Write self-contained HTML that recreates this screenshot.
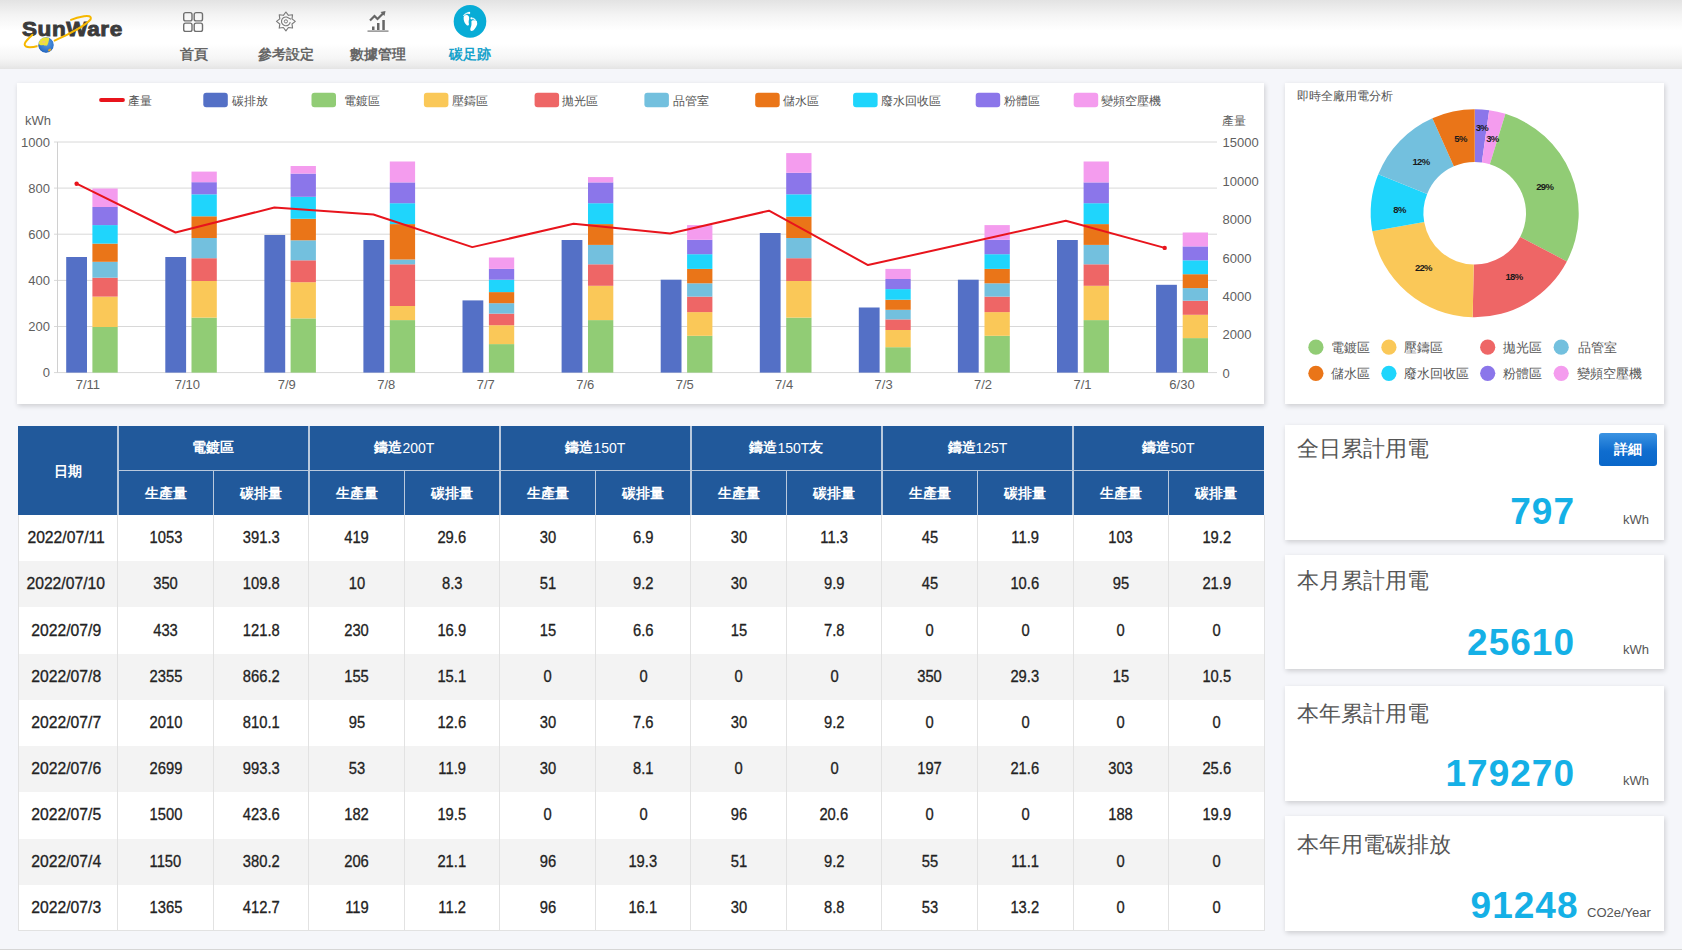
<!DOCTYPE html>
<html lang="zh-Hant">
<head>
<meta charset="utf-8">
<title>SunWare 碳足跡</title>
<style>
*{margin:0;padding:0;box-sizing:border-box}
html,body{width:1682px;height:950px;overflow:hidden}
body{position:relative;background:#f5f6fa;font-family:"Liberation Sans",sans-serif;color:#333}
.hdr{position:absolute;left:0;top:0;width:1682px;height:68.7px;
 background:linear-gradient(to bottom,#e3e3e3 0%,#f4f4f4 22%,#ffffff 44%,#ffffff 63%,#f6f6f6 84%,#ececec 94%,#e4e4e4 100%)}
.logo{position:absolute;left:21.5px;top:15px;font-size:20.5px;line-height:27px;font-weight:bold;color:#3b3b3b;letter-spacing:0.5px;-webkit-text-stroke:0.9px #3b3b3b;transform:scaleX(1.1);transform-origin:0 0}
.nav{position:absolute;top:46px;font-size:14px;color:#666;white-space:nowrap;font-weight:bold}
.nav.act{color:#17a2cb}
.card{position:absolute;background:#fff;box-shadow:1px 2px 5px rgba(0,0,0,0.17)}
svg.charts{position:absolute;left:0;top:0}
.ax{font-size:13px;fill:#5f5f5f;font-family:"Liberation Sans",sans-serif}
.lg{font-size:12.3px;fill:#555;font-family:"Liberation Sans",sans-serif}
.pl{font-size:9.5px;font-weight:bold;letter-spacing:-0.7px;fill:#1a1a1a;font-family:"Liberation Sans",sans-serif}
.th{position:absolute;background:#21599b;color:#fff;font-size:14px;font-weight:bold;display:flex;align-items:center;justify-content:center}
.th.s{padding-top:3px}
.th .n{font-weight:normal}
.hl{position:absolute;background:#b9c9dd}
.tr{position:absolute;left:18px;width:1246px}
.td{position:absolute;display:flex;align-items:center;justify-content:center;font-size:15.5px;color:#222}
.td span{display:inline-block;font-size:16.2px;transform:scaleX(0.91);-webkit-text-stroke:0.3px #222;margin-top:-1px}
.td.d span{transform:translateX(-1.8px) scaleX(0.97)}
.vl{position:absolute;width:1px;background:#e2e2e2}
.stat .t{position:absolute;left:12px;font-size:21.5px;color:#555;white-space:nowrap}
.stat .v{position:absolute;font-size:37px;font-weight:bold;color:#15b0e6;white-space:nowrap;line-height:1;letter-spacing:1px}
.stat .u{position:absolute;font-size:13px;color:#555;white-space:nowrap;line-height:1}
.btn{position:absolute;left:314px;top:8px;width:58px;height:33px;border-radius:3px;background:linear-gradient(#3b93e2,#0f6dcf 55%,#0a67c9);color:#fff;font-size:14px;font-weight:bold;display:flex;align-items:center;justify-content:center}
</style>
</head>
<body>
<div class="hdr">
  <div class="logo">SunWare</div>
  <svg style="position:absolute;left:0;top:0" width="140" height="68">
    <defs>
      <radialGradient id="gl" cx="0.55" cy="0.4" r="0.7">
        <stop offset="0" stop-color="#5b9be0"/><stop offset="0.65" stop-color="#3176cc"/><stop offset="1" stop-color="#1a56ae"/>
      </radialGradient>
      <clipPath id="gc"><circle cx="46" cy="45" r="7.9"/></clipPath>
    </defs>
    <path d="M32.4,34.8 C28,39 22,44 26,46.5 C29,48 34,47 38,46 M54.5,40.6 C70,34 86,25 90.5,19.5 C92,16 88,15.5 84,16.2 C79,17 74,18.5 71,19.8" fill="none" stroke="#f6b800" stroke-width="2" stroke-linecap="round"/>
    <circle cx="46" cy="45" r="7.9" fill="url(#gl)"/>
    <g clip-path="url(#gc)"><path d="M38.3,43.5 C38.8,41 40.5,38.6 43,37.5 C45,37 47.5,37 49.2,37.9 C49.4,39.5 48.6,41 48.4,42.5 C47.8,43.8 47.6,45.2 46.6,45.8 C45.5,45.2 44.6,46 43.8,45.3 C42.8,44.6 41.8,45.8 40.6,45.2 C39.8,44.6 39,44.8 38.3,44.6 Z" fill="#ece23a"/>
    <ellipse cx="43.8" cy="42" rx="1.6" ry="1.3" fill="#f0c27a" opacity="0.8"/>
    <ellipse cx="49.6" cy="50" rx="1.8" ry="1.1" transform="rotate(-35 49.6 50)" fill="#e6a424"/></g>
    <circle cx="46" cy="45" r="8.4" fill="none" stroke="#fff" stroke-width="1" opacity="0.7"/>
  </svg>
  <!-- grid icon -->
  <svg style="position:absolute;left:182px;top:11px" width="22" height="22" viewBox="0 0 22 22">
    <g fill="none" stroke="#6f6f6f" stroke-width="1.4">
      <rect x="1.7" y="1.6" width="8.3" height="8.3" rx="1.9"/><rect x="12.2" y="1.6" width="8.3" height="8.3" rx="1.9"/>
      <rect x="1.7" y="12.1" width="8.3" height="8.3" rx="1.9"/><rect x="12.2" y="12.1" width="8.3" height="8.3" rx="1.9"/>
    </g>
  </svg>
  <div class="nav" style="left:180px">首頁</div>
  <!-- gear -->
  <svg style="position:absolute;left:272px;top:8px" width="28" height="28" viewBox="0 0 28 28">
    <path d="M13.90,4.00 L16.43,7.30 L20.55,6.75 L20.00,10.87 L23.30,13.40 L20.00,15.93 L20.55,20.05 L16.43,19.50 L13.90,22.80 L11.37,19.50 L7.25,20.05 L7.80,15.93 L4.50,13.40 L7.80,10.87 L7.25,6.75 L11.37,7.30 Z" fill="none" stroke="#7a7a7a" stroke-width="1.15" stroke-linejoin="round"/>
    <path d="M18.23,14.16 A4.4,4.4 0 1 1 14.66,9.07 L19.10,11.20" fill="none" stroke="#7a7a7a" stroke-width="1.1"/>
    <circle cx="13.9" cy="13.4" r="1.6" fill="none" stroke="#7a7a7a" stroke-width="1"/>
  </svg>
  <div class="nav" style="left:258px">參考設定</div>
  <!-- chart icon -->
  <svg style="position:absolute;left:366px;top:11px" width="24" height="22" viewBox="0 0 24 22">
    <path d="M4,9.5 L8.5,5 L11.5,8 L18,1.5" fill="none" stroke="#666" stroke-width="2.2"/>
    <path d="M14.5,1 L19.5,0 L18.5,5 Z" fill="#666"/>
    <rect x="6" y="15.5" width="2.5" height="3.5" fill="#666"/>
    <rect x="11" y="12" width="2.5" height="7" fill="#666"/>
    <rect x="16.3" y="9" width="2.5" height="10" fill="#666"/>
    <rect x="1.5" y="19.5" width="21" height="1.2" fill="#777"/>
  </svg>
  <div class="nav" style="left:350px">數據管理</div>
  <!-- footprint -->
  <svg style="position:absolute;left:453px;top:5px" width="34" height="34" viewBox="0 0 34 34">
    <circle cx="17" cy="16.4" r="16.3" fill="#08acd6"/>
    <g fill="#fff">
      <path d="M10.6,12.5 C10.4,15.5 11.8,18.8 13.8,20.3 C15,21.1 16.3,20.3 15.9,18.8 C15.5,17.5 15.6,16 16.1,14.2 C16.6,11.8 15.5,10 13.3,10 C11.8,10 10.7,10.9 10.6,12.5 Z"/>
      <circle cx="16.1" cy="8" r="1.15"/><circle cx="14.5" cy="8" r="0.85"/><circle cx="13.1" cy="8.6" r="0.8"/><circle cx="11.9" cy="9.4" r="0.7"/><circle cx="10.9" cy="10.4" r="0.65"/>
      <path d="M18.4,16.8 C18.6,19 18.5,21 17.6,22.8 C16.9,24.4 17.3,26 18.6,26.1 C20.6,26.2 23.2,22.5 24.1,19.6 C24.7,17.4 23.5,15.6 21.5,15.3 C19.6,15.1 18.3,15.6 18.4,16.8 Z"/>
      <circle cx="18.5" cy="13.3" r="1.15"/><circle cx="20.1" cy="13.5" r="0.85"/><circle cx="21.4" cy="14.2" r="0.8"/><circle cx="22.5" cy="15.1" r="0.7"/><circle cx="23.4" cy="16.3" r="0.65"/>
    </g>
  </svg>
  <div class="nav act" style="left:449px">碳足跡</div>
</div>

<div class="card" style="left:17px;top:83px;width:1247px;height:320.5px"></div>
<div class="card" style="left:1285px;top:83px;width:379px;height:320.5px"></div>

<div class="th s" style="left:18.0px;top:425.5px;width:99.8px;height:89.5px">日期</div>
<div class="th" style="left:117.80px;top:425.5px;width:191.04px;height:45.0px">電鍍區</div>
<div class="th s" style="left:117.80px;top:470.5px;width:95.52px;height:44.5px">生產量</div>
<div class="th s" style="left:213.32px;top:470.5px;width:95.52px;height:44.5px">碳排量</div>
<div class="th" style="left:308.84px;top:425.5px;width:191.04px;height:45.0px">鑄造<span class="n">200T</span></div>
<div class="th s" style="left:308.84px;top:470.5px;width:95.52px;height:44.5px">生產量</div>
<div class="th s" style="left:404.36px;top:470.5px;width:95.52px;height:44.5px">碳排量</div>
<div class="th" style="left:499.88px;top:425.5px;width:191.04px;height:45.0px">鑄造<span class="n">150T</span></div>
<div class="th s" style="left:499.88px;top:470.5px;width:95.52px;height:44.5px">生產量</div>
<div class="th s" style="left:595.40px;top:470.5px;width:95.52px;height:44.5px">碳排量</div>
<div class="th" style="left:690.92px;top:425.5px;width:191.04px;height:45.0px">鑄造<span class="n">150T</span>友</div>
<div class="th s" style="left:690.92px;top:470.5px;width:95.52px;height:44.5px">生產量</div>
<div class="th s" style="left:786.44px;top:470.5px;width:95.52px;height:44.5px">碳排量</div>
<div class="th" style="left:881.96px;top:425.5px;width:191.04px;height:45.0px">鑄造<span class="n">125T</span></div>
<div class="th s" style="left:881.96px;top:470.5px;width:95.52px;height:44.5px">生產量</div>
<div class="th s" style="left:977.48px;top:470.5px;width:95.52px;height:44.5px">碳排量</div>
<div class="th" style="left:1073.00px;top:425.5px;width:191.04px;height:45.0px">鑄造<span class="n">50T</span></div>
<div class="th s" style="left:1073.00px;top:470.5px;width:95.52px;height:44.5px">生產量</div>
<div class="th s" style="left:1168.52px;top:470.5px;width:95.52px;height:44.5px">碳排量</div>
<div class="hl" style="left:117.8px;top:469.5px;width:1146.24px;height:1.5px"></div>
<div class="hl" style="left:117.05px;top:425.5px;width:1.5px;height:89.5px"></div>
<div class="hl" style="left:212.57px;top:470.5px;width:1.5px;height:44.5px"></div>
<div class="hl" style="left:308.09px;top:425.5px;width:1.5px;height:89.5px"></div>
<div class="hl" style="left:403.61px;top:470.5px;width:1.5px;height:44.5px"></div>
<div class="hl" style="left:499.13px;top:425.5px;width:1.5px;height:89.5px"></div>
<div class="hl" style="left:594.65px;top:470.5px;width:1.5px;height:44.5px"></div>
<div class="hl" style="left:690.17px;top:425.5px;width:1.5px;height:89.5px"></div>
<div class="hl" style="left:785.69px;top:470.5px;width:1.5px;height:44.5px"></div>
<div class="hl" style="left:881.21px;top:425.5px;width:1.5px;height:89.5px"></div>
<div class="hl" style="left:976.73px;top:470.5px;width:1.5px;height:44.5px"></div>
<div class="hl" style="left:1072.25px;top:425.5px;width:1.5px;height:89.5px"></div>
<div class="hl" style="left:1167.77px;top:470.5px;width:1.5px;height:44.5px"></div>
<div class="tr" style="top:515.00px;height:46.22px;background:#fff"></div>
<div class="td d" style="left:18.00px;top:515.00px;width:99.80px;height:46.22px"><span>2022/07/11</span></div>
<div class="td" style="left:117.80px;top:515.00px;width:95.52px;height:46.22px"><span>1053</span></div>
<div class="td" style="left:213.32px;top:515.00px;width:95.52px;height:46.22px"><span>391.3</span></div>
<div class="td" style="left:308.84px;top:515.00px;width:95.52px;height:46.22px"><span>419</span></div>
<div class="td" style="left:404.36px;top:515.00px;width:95.52px;height:46.22px"><span>29.6</span></div>
<div class="td" style="left:499.88px;top:515.00px;width:95.52px;height:46.22px"><span>30</span></div>
<div class="td" style="left:595.40px;top:515.00px;width:95.52px;height:46.22px"><span>6.9</span></div>
<div class="td" style="left:690.92px;top:515.00px;width:95.52px;height:46.22px"><span>30</span></div>
<div class="td" style="left:786.44px;top:515.00px;width:95.52px;height:46.22px"><span>11.3</span></div>
<div class="td" style="left:881.96px;top:515.00px;width:95.52px;height:46.22px"><span>45</span></div>
<div class="td" style="left:977.48px;top:515.00px;width:95.52px;height:46.22px"><span>11.9</span></div>
<div class="td" style="left:1073.00px;top:515.00px;width:95.52px;height:46.22px"><span>103</span></div>
<div class="td" style="left:1168.52px;top:515.00px;width:95.52px;height:46.22px"><span>19.2</span></div>
<div class="tr" style="top:561.22px;height:46.22px;background:#f3f3f3"></div>
<div class="td d" style="left:18.00px;top:561.22px;width:99.80px;height:46.22px"><span>2022/07/10</span></div>
<div class="td" style="left:117.80px;top:561.22px;width:95.52px;height:46.22px"><span>350</span></div>
<div class="td" style="left:213.32px;top:561.22px;width:95.52px;height:46.22px"><span>109.8</span></div>
<div class="td" style="left:308.84px;top:561.22px;width:95.52px;height:46.22px"><span>10</span></div>
<div class="td" style="left:404.36px;top:561.22px;width:95.52px;height:46.22px"><span>8.3</span></div>
<div class="td" style="left:499.88px;top:561.22px;width:95.52px;height:46.22px"><span>51</span></div>
<div class="td" style="left:595.40px;top:561.22px;width:95.52px;height:46.22px"><span>9.2</span></div>
<div class="td" style="left:690.92px;top:561.22px;width:95.52px;height:46.22px"><span>30</span></div>
<div class="td" style="left:786.44px;top:561.22px;width:95.52px;height:46.22px"><span>9.9</span></div>
<div class="td" style="left:881.96px;top:561.22px;width:95.52px;height:46.22px"><span>45</span></div>
<div class="td" style="left:977.48px;top:561.22px;width:95.52px;height:46.22px"><span>10.6</span></div>
<div class="td" style="left:1073.00px;top:561.22px;width:95.52px;height:46.22px"><span>95</span></div>
<div class="td" style="left:1168.52px;top:561.22px;width:95.52px;height:46.22px"><span>21.9</span></div>
<div class="tr" style="top:607.44px;height:46.22px;background:#fff"></div>
<div class="td d" style="left:18.00px;top:607.44px;width:99.80px;height:46.22px"><span>2022/07/9</span></div>
<div class="td" style="left:117.80px;top:607.44px;width:95.52px;height:46.22px"><span>433</span></div>
<div class="td" style="left:213.32px;top:607.44px;width:95.52px;height:46.22px"><span>121.8</span></div>
<div class="td" style="left:308.84px;top:607.44px;width:95.52px;height:46.22px"><span>230</span></div>
<div class="td" style="left:404.36px;top:607.44px;width:95.52px;height:46.22px"><span>16.9</span></div>
<div class="td" style="left:499.88px;top:607.44px;width:95.52px;height:46.22px"><span>15</span></div>
<div class="td" style="left:595.40px;top:607.44px;width:95.52px;height:46.22px"><span>6.6</span></div>
<div class="td" style="left:690.92px;top:607.44px;width:95.52px;height:46.22px"><span>15</span></div>
<div class="td" style="left:786.44px;top:607.44px;width:95.52px;height:46.22px"><span>7.8</span></div>
<div class="td" style="left:881.96px;top:607.44px;width:95.52px;height:46.22px"><span>0</span></div>
<div class="td" style="left:977.48px;top:607.44px;width:95.52px;height:46.22px"><span>0</span></div>
<div class="td" style="left:1073.00px;top:607.44px;width:95.52px;height:46.22px"><span>0</span></div>
<div class="td" style="left:1168.52px;top:607.44px;width:95.52px;height:46.22px"><span>0</span></div>
<div class="tr" style="top:653.67px;height:46.22px;background:#f3f3f3"></div>
<div class="td d" style="left:18.00px;top:653.67px;width:99.80px;height:46.22px"><span>2022/07/8</span></div>
<div class="td" style="left:117.80px;top:653.67px;width:95.52px;height:46.22px"><span>2355</span></div>
<div class="td" style="left:213.32px;top:653.67px;width:95.52px;height:46.22px"><span>866.2</span></div>
<div class="td" style="left:308.84px;top:653.67px;width:95.52px;height:46.22px"><span>155</span></div>
<div class="td" style="left:404.36px;top:653.67px;width:95.52px;height:46.22px"><span>15.1</span></div>
<div class="td" style="left:499.88px;top:653.67px;width:95.52px;height:46.22px"><span>0</span></div>
<div class="td" style="left:595.40px;top:653.67px;width:95.52px;height:46.22px"><span>0</span></div>
<div class="td" style="left:690.92px;top:653.67px;width:95.52px;height:46.22px"><span>0</span></div>
<div class="td" style="left:786.44px;top:653.67px;width:95.52px;height:46.22px"><span>0</span></div>
<div class="td" style="left:881.96px;top:653.67px;width:95.52px;height:46.22px"><span>350</span></div>
<div class="td" style="left:977.48px;top:653.67px;width:95.52px;height:46.22px"><span>29.3</span></div>
<div class="td" style="left:1073.00px;top:653.67px;width:95.52px;height:46.22px"><span>15</span></div>
<div class="td" style="left:1168.52px;top:653.67px;width:95.52px;height:46.22px"><span>10.5</span></div>
<div class="tr" style="top:699.89px;height:46.22px;background:#fff"></div>
<div class="td d" style="left:18.00px;top:699.89px;width:99.80px;height:46.22px"><span>2022/07/7</span></div>
<div class="td" style="left:117.80px;top:699.89px;width:95.52px;height:46.22px"><span>2010</span></div>
<div class="td" style="left:213.32px;top:699.89px;width:95.52px;height:46.22px"><span>810.1</span></div>
<div class="td" style="left:308.84px;top:699.89px;width:95.52px;height:46.22px"><span>95</span></div>
<div class="td" style="left:404.36px;top:699.89px;width:95.52px;height:46.22px"><span>12.6</span></div>
<div class="td" style="left:499.88px;top:699.89px;width:95.52px;height:46.22px"><span>30</span></div>
<div class="td" style="left:595.40px;top:699.89px;width:95.52px;height:46.22px"><span>7.6</span></div>
<div class="td" style="left:690.92px;top:699.89px;width:95.52px;height:46.22px"><span>30</span></div>
<div class="td" style="left:786.44px;top:699.89px;width:95.52px;height:46.22px"><span>9.2</span></div>
<div class="td" style="left:881.96px;top:699.89px;width:95.52px;height:46.22px"><span>0</span></div>
<div class="td" style="left:977.48px;top:699.89px;width:95.52px;height:46.22px"><span>0</span></div>
<div class="td" style="left:1073.00px;top:699.89px;width:95.52px;height:46.22px"><span>0</span></div>
<div class="td" style="left:1168.52px;top:699.89px;width:95.52px;height:46.22px"><span>0</span></div>
<div class="tr" style="top:746.11px;height:46.22px;background:#f3f3f3"></div>
<div class="td d" style="left:18.00px;top:746.11px;width:99.80px;height:46.22px"><span>2022/07/6</span></div>
<div class="td" style="left:117.80px;top:746.11px;width:95.52px;height:46.22px"><span>2699</span></div>
<div class="td" style="left:213.32px;top:746.11px;width:95.52px;height:46.22px"><span>993.3</span></div>
<div class="td" style="left:308.84px;top:746.11px;width:95.52px;height:46.22px"><span>53</span></div>
<div class="td" style="left:404.36px;top:746.11px;width:95.52px;height:46.22px"><span>11.9</span></div>
<div class="td" style="left:499.88px;top:746.11px;width:95.52px;height:46.22px"><span>30</span></div>
<div class="td" style="left:595.40px;top:746.11px;width:95.52px;height:46.22px"><span>8.1</span></div>
<div class="td" style="left:690.92px;top:746.11px;width:95.52px;height:46.22px"><span>0</span></div>
<div class="td" style="left:786.44px;top:746.11px;width:95.52px;height:46.22px"><span>0</span></div>
<div class="td" style="left:881.96px;top:746.11px;width:95.52px;height:46.22px"><span>197</span></div>
<div class="td" style="left:977.48px;top:746.11px;width:95.52px;height:46.22px"><span>21.6</span></div>
<div class="td" style="left:1073.00px;top:746.11px;width:95.52px;height:46.22px"><span>303</span></div>
<div class="td" style="left:1168.52px;top:746.11px;width:95.52px;height:46.22px"><span>25.6</span></div>
<div class="tr" style="top:792.33px;height:46.22px;background:#fff"></div>
<div class="td d" style="left:18.00px;top:792.33px;width:99.80px;height:46.22px"><span>2022/07/5</span></div>
<div class="td" style="left:117.80px;top:792.33px;width:95.52px;height:46.22px"><span>1500</span></div>
<div class="td" style="left:213.32px;top:792.33px;width:95.52px;height:46.22px"><span>423.6</span></div>
<div class="td" style="left:308.84px;top:792.33px;width:95.52px;height:46.22px"><span>182</span></div>
<div class="td" style="left:404.36px;top:792.33px;width:95.52px;height:46.22px"><span>19.5</span></div>
<div class="td" style="left:499.88px;top:792.33px;width:95.52px;height:46.22px"><span>0</span></div>
<div class="td" style="left:595.40px;top:792.33px;width:95.52px;height:46.22px"><span>0</span></div>
<div class="td" style="left:690.92px;top:792.33px;width:95.52px;height:46.22px"><span>96</span></div>
<div class="td" style="left:786.44px;top:792.33px;width:95.52px;height:46.22px"><span>20.6</span></div>
<div class="td" style="left:881.96px;top:792.33px;width:95.52px;height:46.22px"><span>0</span></div>
<div class="td" style="left:977.48px;top:792.33px;width:95.52px;height:46.22px"><span>0</span></div>
<div class="td" style="left:1073.00px;top:792.33px;width:95.52px;height:46.22px"><span>188</span></div>
<div class="td" style="left:1168.52px;top:792.33px;width:95.52px;height:46.22px"><span>19.9</span></div>
<div class="tr" style="top:838.56px;height:46.22px;background:#f3f3f3"></div>
<div class="td d" style="left:18.00px;top:838.56px;width:99.80px;height:46.22px"><span>2022/07/4</span></div>
<div class="td" style="left:117.80px;top:838.56px;width:95.52px;height:46.22px"><span>1150</span></div>
<div class="td" style="left:213.32px;top:838.56px;width:95.52px;height:46.22px"><span>380.2</span></div>
<div class="td" style="left:308.84px;top:838.56px;width:95.52px;height:46.22px"><span>206</span></div>
<div class="td" style="left:404.36px;top:838.56px;width:95.52px;height:46.22px"><span>21.1</span></div>
<div class="td" style="left:499.88px;top:838.56px;width:95.52px;height:46.22px"><span>96</span></div>
<div class="td" style="left:595.40px;top:838.56px;width:95.52px;height:46.22px"><span>19.3</span></div>
<div class="td" style="left:690.92px;top:838.56px;width:95.52px;height:46.22px"><span>51</span></div>
<div class="td" style="left:786.44px;top:838.56px;width:95.52px;height:46.22px"><span>9.2</span></div>
<div class="td" style="left:881.96px;top:838.56px;width:95.52px;height:46.22px"><span>55</span></div>
<div class="td" style="left:977.48px;top:838.56px;width:95.52px;height:46.22px"><span>11.1</span></div>
<div class="td" style="left:1073.00px;top:838.56px;width:95.52px;height:46.22px"><span>0</span></div>
<div class="td" style="left:1168.52px;top:838.56px;width:95.52px;height:46.22px"><span>0</span></div>
<div class="tr" style="top:884.78px;height:46.22px;background:#fff"></div>
<div class="td d" style="left:18.00px;top:884.78px;width:99.80px;height:46.22px"><span>2022/07/3</span></div>
<div class="td" style="left:117.80px;top:884.78px;width:95.52px;height:46.22px"><span>1365</span></div>
<div class="td" style="left:213.32px;top:884.78px;width:95.52px;height:46.22px"><span>412.7</span></div>
<div class="td" style="left:308.84px;top:884.78px;width:95.52px;height:46.22px"><span>119</span></div>
<div class="td" style="left:404.36px;top:884.78px;width:95.52px;height:46.22px"><span>11.2</span></div>
<div class="td" style="left:499.88px;top:884.78px;width:95.52px;height:46.22px"><span>96</span></div>
<div class="td" style="left:595.40px;top:884.78px;width:95.52px;height:46.22px"><span>16.1</span></div>
<div class="td" style="left:690.92px;top:884.78px;width:95.52px;height:46.22px"><span>30</span></div>
<div class="td" style="left:786.44px;top:884.78px;width:95.52px;height:46.22px"><span>8.8</span></div>
<div class="td" style="left:881.96px;top:884.78px;width:95.52px;height:46.22px"><span>53</span></div>
<div class="td" style="left:977.48px;top:884.78px;width:95.52px;height:46.22px"><span>13.2</span></div>
<div class="td" style="left:1073.00px;top:884.78px;width:95.52px;height:46.22px"><span>0</span></div>
<div class="td" style="left:1168.52px;top:884.78px;width:95.52px;height:46.22px"><span>0</span></div>
<div class="vl" style="left:17.50px;top:515.0px;height:416.0px"></div>
<div class="vl" style="left:117.30px;top:515.0px;height:416.0px"></div>
<div class="vl" style="left:212.82px;top:515.0px;height:416.0px"></div>
<div class="vl" style="left:308.34px;top:515.0px;height:416.0px"></div>
<div class="vl" style="left:403.86px;top:515.0px;height:416.0px"></div>
<div class="vl" style="left:499.38px;top:515.0px;height:416.0px"></div>
<div class="vl" style="left:594.90px;top:515.0px;height:416.0px"></div>
<div class="vl" style="left:690.42px;top:515.0px;height:416.0px"></div>
<div class="vl" style="left:785.94px;top:515.0px;height:416.0px"></div>
<div class="vl" style="left:881.46px;top:515.0px;height:416.0px"></div>
<div class="vl" style="left:976.98px;top:515.0px;height:416.0px"></div>
<div class="vl" style="left:1072.50px;top:515.0px;height:416.0px"></div>
<div class="vl" style="left:1168.02px;top:515.0px;height:416.0px"></div>
<div class="vl" style="left:1263.54px;top:515.0px;height:416.0px"></div>
<div class="vl" style="left:18.0px;top:930px;height:1px;width:1246.04px"></div>

<div class="card stat" style="left:1285px;top:425px;width:379px;height:115px">
  <div class="t" style="top:9px">全日累計用電</div>
  <div class="btn">詳細</div>
  <div class="v" style="right:89px;top:68px">797</div>
  <div class="u" style="left:338px;top:88px">kWh</div>
</div>
<div class="card stat" style="left:1285px;top:555px;width:379px;height:114px">
  <div class="t" style="top:11px">本月累計用電</div>
  <div class="v" style="right:89px;top:69px">25610</div>
  <div class="u" style="left:338px;top:88px">kWh</div>
</div>
<div class="card stat" style="left:1285px;top:686px;width:379px;height:115px">
  <div class="t" style="top:13px">本年累計用電</div>
  <div class="v" style="right:89px;top:69px">179270</div>
  <div class="u" style="left:338px;top:88px">kWh</div>
</div>
<div class="card stat" style="left:1285px;top:816px;width:379px;height:115px">
  <div class="t" style="top:14px">本年用電碳排放</div>
  <div class="v" style="right:85.5px;top:71px">91248</div>
  <div class="u" style="left:302px;top:90px">CO2e/Year</div>
</div>

<svg class="charts" width="1682" height="950" viewBox="0 0 1682 950">
<line x1="54" y1="142.0" x2="1217" y2="142.0" stroke="#d8d8d8" stroke-width="1"/>
<line x1="54" y1="188.1" x2="1217" y2="188.1" stroke="#d8d8d8" stroke-width="1"/>
<line x1="54" y1="234.2" x2="1217" y2="234.2" stroke="#d8d8d8" stroke-width="1"/>
<line x1="54" y1="280.4" x2="1217" y2="280.4" stroke="#d8d8d8" stroke-width="1"/>
<line x1="54" y1="326.5" x2="1217" y2="326.5" stroke="#d8d8d8" stroke-width="1"/>
<line x1="54" y1="372.6" x2="1217" y2="372.6" stroke="#d8d8d8" stroke-width="1"/>
<line x1="57.5" y1="142" x2="57.5" y2="372.6" stroke="#d0d0d0" stroke-width="1"/>
<text x="50" y="146.5" text-anchor="end" class="ax">1000</text>
<text x="50" y="192.6" text-anchor="end" class="ax">800</text>
<text x="50" y="238.7" text-anchor="end" class="ax">600</text>
<text x="50" y="284.9" text-anchor="end" class="ax">400</text>
<text x="50" y="331.0" text-anchor="end" class="ax">200</text>
<text x="50" y="377.1" text-anchor="end" class="ax">0</text>
<text x="1222.5" y="146.5" class="ax">15000</text>
<text x="1222.5" y="185.5" class="ax">10000</text>
<text x="1222.5" y="223.5" class="ax">8000</text>
<text x="1222.5" y="262.5" class="ax">6000</text>
<text x="1222.5" y="300.5" class="ax">4000</text>
<text x="1222.5" y="338.5" class="ax">2000</text>
<text x="1222.5" y="377.5" class="ax">0</text>
<text x="25" y="124.5" class="ax">kWh</text>
<text x="1222" y="124.5" class="ax" style="font-size:12px">產量</text>
<rect x="66.2" y="257.0" width="20.8" height="115.6" fill="#5470c6"/>
<rect x="92.4" y="327.0" width="25.3" height="45.6" fill="#91cc75"/>
<rect x="92.4" y="296.6" width="25.3" height="30.4" fill="#fac858"/>
<rect x="92.4" y="277.7" width="25.3" height="18.9" fill="#ee6666"/>
<rect x="92.4" y="261.8" width="25.3" height="15.9" fill="#73c0de"/>
<rect x="92.4" y="243.6" width="25.3" height="18.2" fill="#ea7518"/>
<rect x="92.4" y="225.1" width="25.3" height="18.5" fill="#1fd5fc"/>
<rect x="92.4" y="207.0" width="25.3" height="18.1" fill="#8b76ea"/>
<rect x="92.4" y="188.5" width="25.3" height="18.5" fill="#f49cee"/>
<text x="87.9" y="388.5" text-anchor="middle" class="ax">7/11</text>
<rect x="165.3" y="257.0" width="20.8" height="115.6" fill="#5470c6"/>
<rect x="191.5" y="317.6" width="25.3" height="55.0" fill="#91cc75"/>
<rect x="191.5" y="281.0" width="25.3" height="36.6" fill="#fac858"/>
<rect x="191.5" y="258.2" width="25.3" height="22.8" fill="#ee6666"/>
<rect x="191.5" y="238.0" width="25.3" height="20.2" fill="#73c0de"/>
<rect x="191.5" y="216.3" width="25.3" height="21.7" fill="#ea7518"/>
<rect x="191.5" y="194.3" width="25.3" height="22.0" fill="#1fd5fc"/>
<rect x="191.5" y="182.2" width="25.3" height="12.1" fill="#8b76ea"/>
<rect x="191.5" y="171.6" width="25.3" height="10.6" fill="#f49cee"/>
<text x="187.4" y="388.5" text-anchor="middle" class="ax">7/10</text>
<rect x="264.4" y="235.0" width="20.8" height="137.6" fill="#5470c6"/>
<rect x="290.6" y="318.4" width="25.3" height="54.2" fill="#91cc75"/>
<rect x="290.6" y="282.2" width="25.3" height="36.2" fill="#fac858"/>
<rect x="290.6" y="260.3" width="25.3" height="21.9" fill="#ee6666"/>
<rect x="290.6" y="240.3" width="25.3" height="20.0" fill="#73c0de"/>
<rect x="290.6" y="218.8" width="25.3" height="21.5" fill="#ea7518"/>
<rect x="290.6" y="196.8" width="25.3" height="22.0" fill="#1fd5fc"/>
<rect x="290.6" y="173.6" width="25.3" height="23.2" fill="#8b76ea"/>
<rect x="290.6" y="166.0" width="25.3" height="7.6" fill="#f49cee"/>
<text x="286.8" y="388.5" text-anchor="middle" class="ax">7/9</text>
<rect x="363.4" y="240.0" width="20.8" height="132.6" fill="#5470c6"/>
<rect x="389.8" y="320.1" width="25.3" height="52.5" fill="#91cc75"/>
<rect x="389.8" y="306.0" width="25.3" height="14.1" fill="#fac858"/>
<rect x="389.8" y="264.3" width="25.3" height="41.7" fill="#ee6666"/>
<rect x="389.8" y="259.5" width="25.3" height="4.8" fill="#73c0de"/>
<rect x="389.8" y="224.1" width="25.3" height="35.4" fill="#ea7518"/>
<rect x="389.8" y="203.2" width="25.3" height="20.9" fill="#1fd5fc"/>
<rect x="389.8" y="182.4" width="25.3" height="20.8" fill="#8b76ea"/>
<rect x="389.8" y="161.5" width="25.3" height="20.9" fill="#f49cee"/>
<text x="386.3" y="388.5" text-anchor="middle" class="ax">7/8</text>
<rect x="462.5" y="300.4" width="20.8" height="72.2" fill="#5470c6"/>
<rect x="488.9" y="344.1" width="25.3" height="28.5" fill="#91cc75"/>
<rect x="488.9" y="325.2" width="25.3" height="18.9" fill="#fac858"/>
<rect x="488.9" y="313.6" width="25.3" height="11.6" fill="#ee6666"/>
<rect x="488.9" y="303.2" width="25.3" height="10.4" fill="#73c0de"/>
<rect x="488.9" y="292.1" width="25.3" height="11.1" fill="#ea7518"/>
<rect x="488.9" y="279.7" width="25.3" height="12.4" fill="#1fd5fc"/>
<rect x="488.9" y="268.9" width="25.3" height="10.8" fill="#8b76ea"/>
<rect x="488.9" y="257.5" width="25.3" height="11.4" fill="#f49cee"/>
<text x="485.7" y="388.5" text-anchor="middle" class="ax">7/7</text>
<rect x="561.6" y="240.0" width="20.8" height="132.6" fill="#5470c6"/>
<rect x="588.0" y="320.1" width="25.3" height="52.5" fill="#91cc75"/>
<rect x="588.0" y="285.8" width="25.3" height="34.3" fill="#fac858"/>
<rect x="588.0" y="264.3" width="25.3" height="21.5" fill="#ee6666"/>
<rect x="588.0" y="244.9" width="25.3" height="19.4" fill="#73c0de"/>
<rect x="588.0" y="224.1" width="25.3" height="20.8" fill="#ea7518"/>
<rect x="588.0" y="203.2" width="25.3" height="20.9" fill="#1fd5fc"/>
<rect x="588.0" y="182.4" width="25.3" height="20.8" fill="#8b76ea"/>
<rect x="588.0" y="177.1" width="25.3" height="5.3" fill="#f49cee"/>
<text x="585.2" y="388.5" text-anchor="middle" class="ax">7/6</text>
<rect x="660.7" y="279.7" width="20.8" height="92.9" fill="#5470c6"/>
<rect x="687.1" y="335.8" width="25.3" height="36.8" fill="#91cc75"/>
<rect x="687.1" y="312.1" width="25.3" height="23.7" fill="#fac858"/>
<rect x="687.1" y="296.6" width="25.3" height="15.5" fill="#ee6666"/>
<rect x="687.1" y="283.3" width="25.3" height="13.3" fill="#73c0de"/>
<rect x="687.1" y="268.9" width="25.3" height="14.4" fill="#ea7518"/>
<rect x="687.1" y="254.2" width="25.3" height="14.7" fill="#1fd5fc"/>
<rect x="687.1" y="239.8" width="25.3" height="14.4" fill="#8b76ea"/>
<rect x="687.1" y="225.1" width="25.3" height="14.7" fill="#f49cee"/>
<text x="684.7" y="388.5" text-anchor="middle" class="ax">7/5</text>
<rect x="759.8" y="233.0" width="20.8" height="139.6" fill="#5470c6"/>
<rect x="786.2" y="317.6" width="25.3" height="55.0" fill="#91cc75"/>
<rect x="786.2" y="281.0" width="25.3" height="36.6" fill="#fac858"/>
<rect x="786.2" y="258.2" width="25.3" height="22.8" fill="#ee6666"/>
<rect x="786.2" y="238.0" width="25.3" height="20.2" fill="#73c0de"/>
<rect x="786.2" y="216.6" width="25.3" height="21.4" fill="#ea7518"/>
<rect x="786.2" y="194.3" width="25.3" height="22.3" fill="#1fd5fc"/>
<rect x="786.2" y="172.8" width="25.3" height="21.5" fill="#8b76ea"/>
<rect x="786.2" y="153.1" width="25.3" height="19.7" fill="#f49cee"/>
<text x="784.1" y="388.5" text-anchor="middle" class="ax">7/4</text>
<rect x="858.8" y="307.5" width="20.8" height="65.1" fill="#5470c6"/>
<rect x="885.4" y="347.2" width="25.3" height="25.4" fill="#91cc75"/>
<rect x="885.4" y="330.0" width="25.3" height="17.2" fill="#fac858"/>
<rect x="885.4" y="319.4" width="25.3" height="10.6" fill="#ee6666"/>
<rect x="885.4" y="309.8" width="25.3" height="9.6" fill="#73c0de"/>
<rect x="885.4" y="299.7" width="25.3" height="10.1" fill="#ea7518"/>
<rect x="885.4" y="289.1" width="25.3" height="10.6" fill="#1fd5fc"/>
<rect x="885.4" y="279.0" width="25.3" height="10.1" fill="#8b76ea"/>
<rect x="885.4" y="268.9" width="25.3" height="10.1" fill="#f49cee"/>
<text x="883.6" y="388.5" text-anchor="middle" class="ax">7/3</text>
<rect x="957.9" y="279.7" width="20.8" height="92.9" fill="#5470c6"/>
<rect x="984.5" y="335.8" width="25.3" height="36.8" fill="#91cc75"/>
<rect x="984.5" y="312.1" width="25.3" height="23.7" fill="#fac858"/>
<rect x="984.5" y="296.6" width="25.3" height="15.5" fill="#ee6666"/>
<rect x="984.5" y="283.3" width="25.3" height="13.3" fill="#73c0de"/>
<rect x="984.5" y="268.9" width="25.3" height="14.4" fill="#ea7518"/>
<rect x="984.5" y="254.2" width="25.3" height="14.7" fill="#1fd5fc"/>
<rect x="984.5" y="239.8" width="25.3" height="14.4" fill="#8b76ea"/>
<rect x="984.5" y="225.1" width="25.3" height="14.7" fill="#f49cee"/>
<text x="983.0" y="388.5" text-anchor="middle" class="ax">7/2</text>
<rect x="1057.0" y="240.0" width="20.8" height="132.6" fill="#5470c6"/>
<rect x="1083.6" y="320.1" width="25.3" height="52.5" fill="#91cc75"/>
<rect x="1083.6" y="285.8" width="25.3" height="34.3" fill="#fac858"/>
<rect x="1083.6" y="264.3" width="25.3" height="21.5" fill="#ee6666"/>
<rect x="1083.6" y="244.9" width="25.3" height="19.4" fill="#73c0de"/>
<rect x="1083.6" y="224.1" width="25.3" height="20.8" fill="#ea7518"/>
<rect x="1083.6" y="203.2" width="25.3" height="20.9" fill="#1fd5fc"/>
<rect x="1083.6" y="182.4" width="25.3" height="20.8" fill="#8b76ea"/>
<rect x="1083.6" y="161.5" width="25.3" height="20.9" fill="#f49cee"/>
<text x="1082.5" y="388.5" text-anchor="middle" class="ax">7/1</text>
<rect x="1156.1" y="284.8" width="20.8" height="87.8" fill="#5470c6"/>
<rect x="1182.7" y="338.1" width="25.3" height="34.5" fill="#91cc75"/>
<rect x="1182.7" y="314.8" width="25.3" height="23.3" fill="#fac858"/>
<rect x="1182.7" y="300.7" width="25.3" height="14.1" fill="#ee6666"/>
<rect x="1182.7" y="288.1" width="25.3" height="12.6" fill="#73c0de"/>
<rect x="1182.7" y="274.2" width="25.3" height="13.9" fill="#ea7518"/>
<rect x="1182.7" y="260.3" width="25.3" height="13.9" fill="#1fd5fc"/>
<rect x="1182.7" y="246.4" width="25.3" height="13.9" fill="#8b76ea"/>
<rect x="1182.7" y="232.5" width="25.3" height="13.9" fill="#f49cee"/>
<text x="1182.0" y="388.5" text-anchor="middle" class="ax">6/30</text>
<polyline points="76.6,183.7 175.5,232.5 274.4,207.5 373.4,214.5 472.3,247.1 573.6,223.8 670.1,233.5 769.0,210.7 868.0,265.1 966.9,243.0 1065.8,220.8 1164.7,247.9" fill="none" stroke="#e8141c" stroke-width="2" stroke-linejoin="round"/>
<circle cx="76.6" cy="183.7" r="2.2" fill="#e8141c"/>
<circle cx="1164.7" cy="247.9" r="2.2" fill="#e8141c"/>
<line x1="101" y1="100" x2="123" y2="100" stroke="#e8141c" stroke-width="3.8" stroke-linecap="round"/>
<text x="128" y="104.5" class="lg">產量</text>
<rect x="203.3" y="92.8" width="24.5" height="14.5" rx="3" fill="#5470c6"/>
<text x="232.2" y="104.5" class="lg">碳排放</text>
<rect x="311.5" y="92.8" width="24.5" height="14.5" rx="3" fill="#91cc75"/>
<text x="343.6" y="104.5" class="lg">電鍍區</text>
<rect x="423.9" y="92.8" width="24.5" height="14.5" rx="3" fill="#fac858"/>
<text x="451.8" y="104.5" class="lg">壓鑄區</text>
<rect x="534.6" y="92.8" width="24.5" height="14.5" rx="3" fill="#ee6666"/>
<text x="561.9" y="104.5" class="lg">拋光區</text>
<rect x="644.4" y="92.8" width="24.5" height="14.5" rx="3" fill="#73c0de"/>
<text x="673.3" y="104.5" class="lg">品管室</text>
<rect x="755.2" y="92.8" width="24.5" height="14.5" rx="3" fill="#ea7518"/>
<text x="783.1" y="104.5" class="lg">儲水區</text>
<rect x="853.1" y="92.8" width="24.5" height="14.5" rx="3" fill="#1fd5fc"/>
<text x="881" y="104.5" class="lg">廢水回收區</text>
<rect x="975.7" y="92.8" width="24.5" height="14.5" rx="3" fill="#8b76ea"/>
<text x="1004" y="104.5" class="lg">粉體區</text>
<rect x="1073.7" y="92.8" width="24.5" height="14.5" rx="3" fill="#f49cee"/>
<text x="1101.3" y="104.5" class="lg">變頻空壓機</text>
<path d="M1474.70,109.20 A104,104 0 0 1 1489.17,110.21 L1481.84,162.40 A51.3,51.3 0 0 0 1474.70,161.90 Z" fill="#8b76ea"/>
<path d="M1489.17,110.21 A104,104 0 0 1 1505.45,113.85 L1489.87,164.19 A51.3,51.3 0 0 0 1481.84,162.40 Z" fill="#f49cee"/>
<path d="M1505.45,113.85 A104,104 0 0 1 1566.87,261.38 L1520.16,236.97 A51.3,51.3 0 0 0 1489.87,164.19 Z" fill="#91cc75"/>
<path d="M1566.87,261.38 A104,104 0 0 1 1472.70,317.18 L1473.72,264.49 A51.3,51.3 0 0 0 1520.16,236.97 Z" fill="#ee6666"/>
<path d="M1472.70,317.18 A104,104 0 0 1 1372.28,231.26 L1424.18,222.11 A51.3,51.3 0 0 0 1473.72,264.49 Z" fill="#fac858"/>
<path d="M1372.28,231.26 A104,104 0 0 1 1378.27,174.24 L1427.14,193.98 A51.3,51.3 0 0 0 1424.18,222.11 Z" fill="#1fd5fc"/>
<path d="M1378.27,174.24 A104,104 0 0 1 1432.40,118.19 L1453.83,166.34 A51.3,51.3 0 0 0 1427.14,193.98 Z" fill="#73c0de"/>
<path d="M1432.40,118.19 A104,104 0 0 1 1474.70,109.20 L1474.70,161.90 A51.3,51.3 0 0 0 1453.83,166.34 Z" fill="#ea7518"/>
<text x="1481.8" y="130.6" text-anchor="middle" class="pl">3%</text>
<text x="1492.4" y="141.5" text-anchor="middle" class="pl">3%</text>
<text x="1460.5" y="142.2" text-anchor="middle" class="pl">5%</text>
<text x="1421" y="164.5" text-anchor="middle" class="pl">12%</text>
<text x="1399.5" y="212.5" text-anchor="middle" class="pl">8%</text>
<text x="1423.4" y="270.5" text-anchor="middle" class="pl">22%</text>
<text x="1514" y="280.3" text-anchor="middle" class="pl">18%</text>
<text x="1544.7" y="189.9" text-anchor="middle" class="pl">29%</text>
<text x="1297" y="100" class="lg" style="fill:#555">即時全廠用電分析</text>
<circle cx="1315.9" cy="347.2" r="7.6" fill="#91cc75"/>
<text x="1331.3" y="351.7" class="lg" style="font-size:12.6px">電鍍區</text>
<circle cx="1388.9" cy="347.2" r="7.6" fill="#fac858"/>
<text x="1404.3" y="351.7" class="lg" style="font-size:12.6px">壓鑄區</text>
<circle cx="1487.7" cy="347.2" r="7.6" fill="#ee6666"/>
<text x="1502.9" y="351.7" class="lg" style="font-size:12.6px">拋光區</text>
<circle cx="1561.2" cy="347.2" r="7.6" fill="#73c0de"/>
<text x="1577.7" y="351.7" class="lg" style="font-size:12.6px">品管室</text>
<circle cx="1315.9" cy="373.3" r="7.6" fill="#ea7518"/>
<text x="1331.3" y="377.8" class="lg" style="font-size:12.6px">儲水區</text>
<circle cx="1388.9" cy="373.3" r="7.6" fill="#1fd5fc"/>
<text x="1404.3" y="377.8" class="lg" style="font-size:12.6px">廢水回收區</text>
<circle cx="1487.7" cy="373.3" r="7.6" fill="#8b76ea"/>
<text x="1502.9" y="377.8" class="lg" style="font-size:12.6px">粉體區</text>
<circle cx="1561.2" cy="373.3" r="7.6" fill="#f49cee"/>
<text x="1576.6" y="377.8" class="lg" style="font-size:12.6px">變頻空壓機</text>
</svg>
<div style="position:absolute;left:0;top:949px;width:1682px;height:1px;background:#d6d6d6"></div>
</body>
</html>
